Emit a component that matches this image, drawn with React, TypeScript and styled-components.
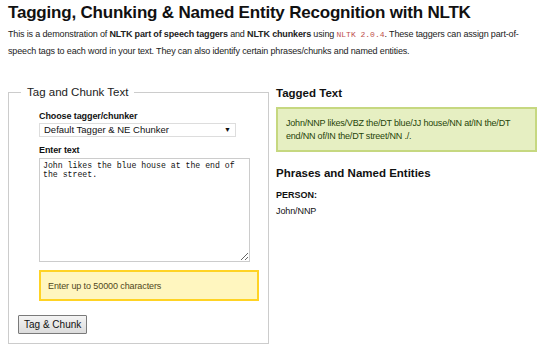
import styled, { createGlobalStyle } from "styled-components";

const GlobalStyle = createGlobalStyle`
    html, body {
        margin: 0;
        padding: 0;
        background: #fff;
    }
    body {
        padding: 0 8px;
        font-family: "Liberation Sans", Arial, sans-serif;
        color: #222;
    }
`;

const Title = styled.h1`
    margin: 0;
    padding-top: 1px;
    font-size: 17px;
    letter-spacing: -0.2px;
    line-height: 24px;
    font-weight: bold;
    color: #111;
    white-space: nowrap;
`;

const Intro = styled.p`
    margin: 1px 0 0;
    max-width: 512px;
    font-size: 9px;
    letter-spacing: -0.15px;
    line-height: 17px;
    color: #222;
`;

const Code = styled.code`
    font-family: "Liberation Mono", monospace;
    font-size: 8px;
    letter-spacing: 0;
    color: #c0504d;
`;

const Columns = styled.div`
    display: flex;
    align-items: flex-start;
    gap: 7px;
    margin-top: 26px;
`;

const FieldSet = styled.fieldset`
    width: 261px;
    box-sizing: border-box;
    margin: 0;
    padding: 4px 9px 9px;
    border: 1px solid #ccc;
`;

const Legend = styled.legend`
    margin-left: 3px;
    padding: 0 6px;
    font-size: 11.5px;
    line-height: 13px;
    color: #222;
`;

const Fields = styled.div`
    margin-left: 21px;
    display: flex;
    flex-direction: column;
    align-items: flex-start;
`;

const Label = styled.label<{ $top: number }>`
    font-size: 9px;
    letter-spacing: -0.1px;
    font-weight: bold;
    line-height: 14px;
    margin-top: ${p => p.$top}px;
    color: #111;
`;

const SelectWrap = styled.div`
    position: relative;
    width: 197px;
`;

const Select = styled.select`
    appearance: none;
    display: block;
    width: 100%;
    height: 14px;
    box-sizing: border-box;
    margin: 0;
    padding: 0 0 0 4px;
    border: 1px solid #ddd;
    background: #fff;
    font-family: "Liberation Sans", Arial, sans-serif;
    font-size: 9.5px;
    line-height: 12px;
    color: #111;
    outline: none;
`;

const Arrow = styled.span`
    position: absolute;
    right: 5px;
    top: 1px;
    font-size: 7px;
    line-height: 12px;
    color: #111;
    pointer-events: none;
`;

const TextArea = styled.textarea`
    display: block;
    width: 211px;
    height: 104px;
    box-sizing: border-box;
    margin: 1px 0 0;
    padding: 3px 3px;
    border: 1px solid #ccc;
    font-family: "Liberation Mono", monospace;
    font-size: 8.2px;
    line-height: 8.5px;
    color: #111;
    resize: both;
    outline: none;
`;

const Notice = styled.div`
    width: 220px;
    height: 31px;
    box-sizing: border-box;
    margin-top: 8px;
    padding: 0 0 0 7px;
    display: flex;
    align-items: center;
    background: #fff6bf;
    border: 2px solid #ffd324;
    font-size: 9px;
    letter-spacing: -0.1px;
    color: #514721;
`;

const Button = styled.button`
    display: block;
    margin-top: 14px;
    height: 19px;
    padding: 0 5px;
    border: 1px solid #7a7a7a;
    border-radius: 1px;
    background: linear-gradient(#f4f4f4, #dcdcdc);
    font-family: "Liberation Sans", Arial, sans-serif;
    font-size: 10px;
    color: #111;
`;

const Results = styled.div`
    width: 261px;
`;

const Heading = styled.h3<{ $top: number }>`
    margin: ${p => p.$top}px 0 0;
    font-size: 11.5px;
    line-height: 14px;
    font-weight: bold;
    color: #111;
`;

const Success = styled.div`
    margin-top: 7px;
    box-sizing: border-box;
    height: 45px;
    padding: 8px 8px 0;
    background: #e6efc2;
    border: 2px solid #c6d880;
    font-size: 9px;
    letter-spacing: -0.2px;
    line-height: 12.5px;
    color: #264409;
`;

const EntityType = styled.div`
    margin-top: 8px;
    font-size: 9px;
    font-weight: bold;
    line-height: 14px;
    color: #111;
`;

const EntityText = styled.div`
    margin-top: 2px;
    font-size: 9px;
    letter-spacing: -0.1px;
    line-height: 14px;
    color: #111;
`;

export default function App() {
    return (
        <>
            <GlobalStyle />
            <Title>Tagging, Chunking &amp; Named Entity Recognition with NLTK</Title>
            <Intro>
                This is a demonstration of <b>NLTK part of speech taggers</b> and <b>NLTK chunkers</b> using{" "}
                <Code>NLTK 2.0.4</Code>. These taggers can assign part-of-speech tags to each word in your text.
                They can also identify certain phrases/chunks and named entities.
            </Intro>
            <Columns>
                <FieldSet>
                    <Legend>Tag and Chunk Text</Legend>
                    <Fields>
                        <Label $top={6}>Choose tagger/chunker</Label>
                        <SelectWrap>
                            <Select defaultValue="ne">
                                <option value="ne">Default Tagger &amp; NE Chunker</option>
                            </Select>
                            <Arrow>▼</Arrow>
                        </SelectWrap>
                        <Label $top={6}>Enter text</Label>
                        <TextArea defaultValue="John likes the blue house at the end of the street." />
                        <Notice>Enter up to 50000 characters</Notice>
                    </Fields>
                    <Button>Tag &amp; Chunk</Button>
                </FieldSet>
                <Results>
                    <Heading $top={0}>Tagged Text</Heading>
                    <Success>
                        John/NNP likes/VBZ the/DT blue/JJ house/NN at/IN the/DT end/NN of/IN the/DT street/NN ./.
                    </Success>
                    <Heading $top={14}>Phrases and Named Entities</Heading>
                    <EntityType>PERSON:</EntityType>
                    <EntityText>John/NNP</EntityText>
                </Results>
            </Columns>
        </>
    );
}
